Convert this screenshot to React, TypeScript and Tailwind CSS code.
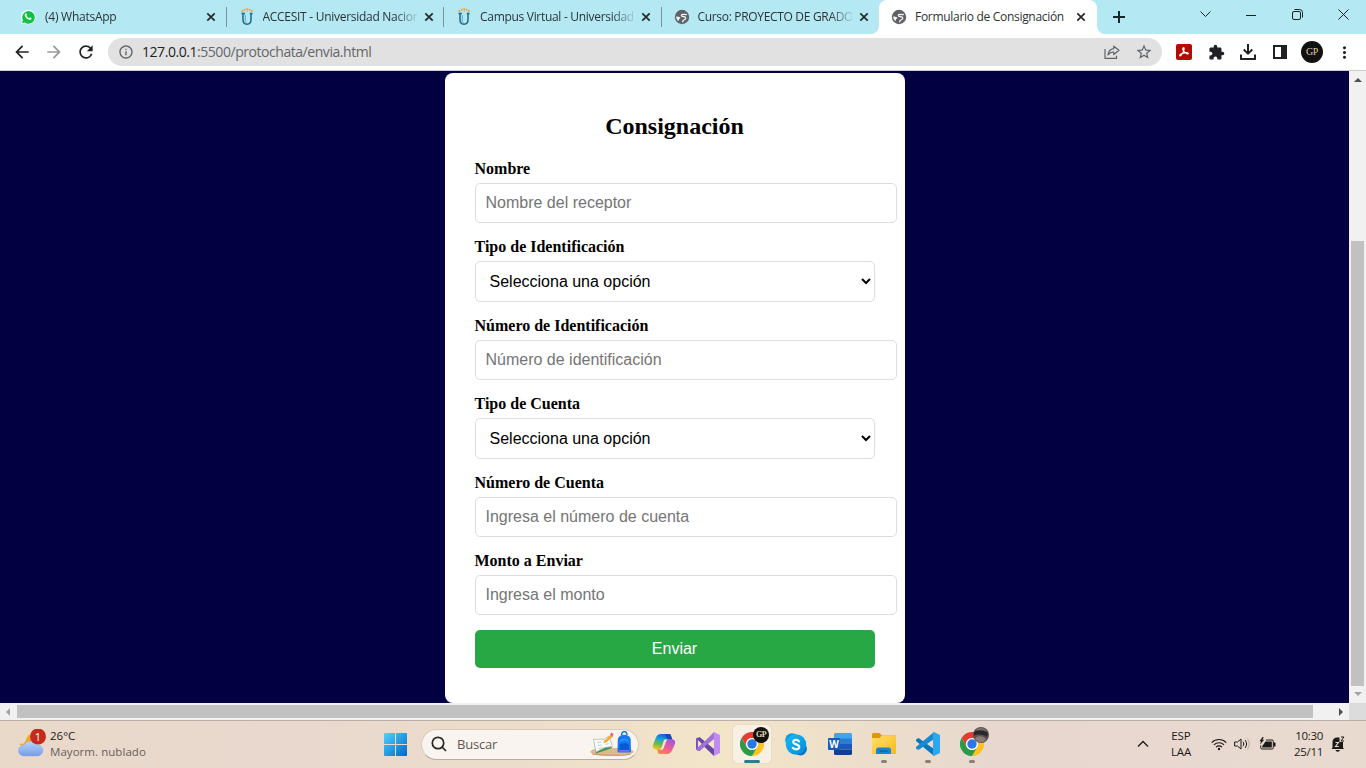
import React from "react";
import { MdArrowBack, MdArrowForward, MdRefresh, MdExtension, MdInfoOutline, MdStarBorder, MdMoreVert } from "react-icons/md";

const UI = "font-['Open_Sans','Noto_Sans',sans-serif]";

function WhatsAppIcon() {
  return (
    <svg width="16" height="16" viewBox="0 0 16 16" className="-ml-[2px]">
      <path d="M1 15.3 2 11.6A7.2 7.2 0 1 1 4.6 14.3Z" fill="#fff" />
      <path d="M2 14.3 2.9 11.3A6.3 6.3 0 1 1 4.8 13.5Z" fill="#12c143" />
      <path d="M5.5 4.4c.4-.3.9-.2 1.1.3l.4 1c.1.3-.4.8-.5 1 .6 1.2 1.5 2 2.6 2.5.3-.1.6-.9 1-.8l1.3.7c.4.4-.1 1.4-.7 1.7-1.6.7-5.6-2-6-4.3-.1-.9.3-1.700.8-2.100Z" fill="#fff" />
    </svg>
  );
}

function UniversityIcon() {
  return (
    <svg width="16" height="18" viewBox="0 0 16 18">
      <path d="M2.500 5.500H6M4 5.500v6.300c0 2.800 1.400 4.400 4 4.400s4-1.600 4-4.400V5.500M10.800 5.500h2.700" fill="none" stroke="#176a8c" strokeWidth="1.500" />
      <path d="M6.300 7v5.500c0 1 .5 1.700 1.200 2" fill="none" stroke="#3f8aa5" strokeWidth=".7" />
      <g fill="#f59a2f">
        <circle cx="3.400" cy="3" r="1" /><circle cx="5.700" cy="1.800" r="1" /><circle cx="8.200" cy="1.300" r="1" />
        <circle cx="10.600" cy="1.800" r="1" /><circle cx="12.800" cy="3" r="1" /><circle cx="8.200" cy="3.600" r=".6" />
      </g>
    </svg>
  );
}

function GlobeIcon() {
  return (
    <svg width="16" height="16" viewBox="0 0 16 16">
      <circle cx="8" cy="8" r="7.200" fill="#5f6368" />
      <path d="M12.800 5.400c-1.200.4-2.300 0-3.500-.100-1.100-.1-1.900.3-1.900 1.100 0 .9.900 1 1.700 1.100 1.500.200 2.800.6 2.600 1.800-.2 1.300-1.700 1.400-2.400 2.200-.5.6-.4 1.300-1.200 1.500" fill="none" stroke="#eef3f4" strokeWidth="1.300" />
      <path d="M2.200 7.500c1.500.1 2.800.1 3.800.8.700.5.300 1.100-.4 1.500-.6.300-.5 1.300-1 2.100C3 11.200 2.100 9.500 2.200 7.500Z" fill="#eef3f4" />
    </svg>
  );
}

function CloseIcon() {
  return (
    <svg width="10" height="10" viewBox="0 0 10 10" className="shrink-0">
      <path d="M1.300 1.300 8.700 8.700M8.700 1.300 1.300 8.700" stroke="#24292c" strokeWidth="1.700" />
    </svg>
  );
}

type TabProps = { icon: React.ReactNode; title: string; active?: boolean; separator?: boolean; tracking: string };

function Tab({ icon, title, active, separator, tracking }: TabProps) {
  return (
    <div className={`relative flex h-[34px] w-[217.5px] shrink-0 items-center pl-[12px] ${active ? "rounded-t-lg bg-white" : ""}`}>
      {active && (
        <>
          <svg className="absolute bottom-0 -left-2" width="8" height="8"><path d="M8 0v8H0A8 8 0 0 0 8 0Z" fill="#fff" /></svg>
          <svg className="absolute -right-2 bottom-0" width="8" height="8"><path d="M0 0v8h8A8 8 0 0 1 0 0Z" fill="#fff" /></svg>
        </>
      )}
      <span className="flex w-4 shrink-0 justify-center">{icon}</span>
      <span className={`ml-2 mr-[7px] w-[154px] shrink-0 overflow-hidden whitespace-nowrap text-[12px] leading-4 text-[#2b3335] ${tracking} ${active ? "" : "[mask-image:linear-gradient(to_right,black_132px,transparent_157px)]"}`}>
        {title}
      </span>
      <CloseIcon />
      {separator && <span className="absolute top-[7px] right-0 h-5 w-px bg-[#7f9297]" />}
    </div>
  );
}

function TabStrip() {
  return (
    <div className="flex h-[34px] bg-[#b4e8f3] pl-[9px]">
      <Tab icon={<WhatsAppIcon />} title="(4) WhatsApp" separator tracking="tracking-[-0.25px]" />
      <Tab icon={<UniversityIcon />} title="ACCESIT - Universidad Nacion" separator tracking="tracking-[-0.28px]" />
      <Tab icon={<UniversityIcon />} title="Campus Virtual - Universidad" separator tracking="tracking-[-0.3px]" />
      <Tab icon={<GlobeIcon />} title="Curso: PROYECTO DE GRADO" tracking="tracking-[-0.32px]" />
      <Tab icon={<GlobeIcon />} title="Formulario de Consignación" active tracking="tracking-[-0.3px]" />
      <div className="flex w-[44px] items-center justify-center">
        <svg width="12" height="12" viewBox="0 0 12 12"><path d="M6 0v12M0 6h12" stroke="#16292e" strokeWidth="2" /></svg>
      </div>
      <div className="ml-auto flex h-[29px] items-center text-[#172225]">
        <span className="flex w-[46px] justify-center"><svg width="11" height="11" viewBox="0 0 11 11"><path d="m.5 2.500 5 5 5-5" fill="none" stroke="currentColor" /></svg></span>
        <span className="flex w-[46px] justify-center"><svg width="10" height="10"><path d="M0 5.500h10" stroke="currentColor" /></svg></span>
        <span className="flex w-[46px] justify-center">
          <svg width="11" height="11" viewBox="0 0 11 11" fill="none" stroke="currentColor"><rect x=".5" y="2.500" width="8" height="8" rx="1.500" /><path d="M2.500.5h5a3 3 0 0 1 3 3v5" /></svg>
        </span>
        <span className="flex w-[46px] justify-center"><svg width="11" height="11" viewBox="0 0 11 11"><path d="m.5.5 10 10m0-10-10 10" stroke="currentColor" /></svg></span>
      </div>
    </div>
  );
}

function Toolbar() {
  const slot = "flex w-8 shrink-0 items-center justify-center";
  return (
    <div className="flex h-[37px] items-center border-b border-[#c8cecf] bg-white pl-[6px] text-[#202124]">
      <span className={slot}><MdArrowBack size={20} /></span>
      <span className={`${slot} text-[#999]`}><MdArrowForward size={20} /></span>
      <span className={slot}><MdRefresh size={20} /></span>
      <div className="ml-[6px] flex h-7 w-[1054px] items-center rounded-full bg-[#e1e1e1] pl-[10px] pr-[2px]">
        <MdInfoOutline size={16} className="text-[#5f6368]" />
        <span className="ml-2 text-[14px] leading-5 tracking-[-0.45px] text-[#62676a]"><span className="text-[#202124]">127.0.0.1</span>:5500/protochata/envia.html</span>
        <span className={`${slot} ml-auto`}>
          <svg width="16" height="16" viewBox="0 0 16 16" fill="none" stroke="#5f6368" strokeWidth="1.200"><path d="M1 5v9.300h11.500v-2.600" /><path d="M9.800 2.200 15 6.300l-5.200 4.200V8C7.300 7.900 5.500 8.800 4 11c.3-3.300 2.300-6 5.800-6.400Z" strokeLinejoin="round" /></svg>
        </span>
        <span className={slot}><MdStarBorder size={18} className="text-[#5f6368]" /></span>
      </div>
      <div className="ml-[6px] flex">
        <span className={slot}>
          <svg width="16" height="16" viewBox="0 0 16 16"><rect width="16" height="16" rx="2" fill="#b30b00" /><path d="M7.200 3.800c1-.5 1.100.8.700 2.400C7.500 8 5.300 11.800 4.100 12c-1.300 0-.2-1.800 2.200-2.600 2.200-.7 5.300-1.100 6-.1.500 1.100-2.100.8-3.500-.9C7.600 7.200 6.300 4.800 7.200 3.800Z" fill="none" stroke="#fff" strokeWidth="1.150" /></svg>
        </span>
        <span className={slot}><MdExtension size={17} /></span>
        <span className={slot}>
          <svg width="16" height="16" viewBox="0 0 16 16" fill="none" stroke="#202124" strokeWidth="2"><path d="M8 0v9M3.700 5.500 8 9.700l4.300-4.200M1 10.500V15h14v-4.500" /></svg>
        </span>
        <span className={slot}>
          <svg width="14" height="14" viewBox="0 0 14 14"><path d="M0 0h14v14H0Zm2 2v10h6V2Z" fill="#202124" fillRule="evenodd" /></svg>
        </span>
        <span className={slot}>
          <span className="flex size-[22px] items-center justify-center rounded-full bg-[#12110f] font-['Liberation_Serif',serif] text-[10px] leading-none tracking-[-0.5px] text-[#dccba4]">GP</span>
        </span>
        <span className={slot}><MdMoreVert size={19} /></span>
      </div>
    </div>
  );
}

const ARROW = "#505050";

function VerticalScrollbar() {
  return (
    <div className="flex w-[17px] shrink-0 flex-col items-center bg-[#f1f1f1]">
      <span className="flex h-[17px] items-center"><svg width="8" height="4"><path d="M0 4 4 0l4 4Z" fill={ARROW} /></svg></span>
      <span className="mt-[153px] h-[445px] w-[13px] bg-[#c1c1c1]" />
      <span className="flex h-[15px] items-center"><svg width="8" height="4"><path d="m0 0 4 4 4-4Z" fill="#a3a3a3" /></svg></span>
    </div>
  );
}

function HorizontalScrollbar() {
  return (
    <div className="flex h-[17px] bg-[#f1f1f1]">
      <div className="flex w-[1349px] items-center">
        <span className="flex w-[17px] justify-center pr-px"><svg width="4" height="8"><path d="M4 0 0 4l4 4Z" fill="#a3a3a3" /></svg></span>
        <span className="h-[13px] w-[1296px] bg-[#c1c1c1]" />
        <span className="ml-auto flex w-[17px] justify-center"><svg width="4" height="8"><path d="m0 0 4 4-4 4Z" fill={ARROW} /></svg></span>
      </div>
      <div className="w-[17px] bg-[#dcdcdc]" />
    </div>
  );
}

type Field = { label: string; hint: string; kind: "input" | "select" };

const FIELDS: Field[] = [
  { label: "Nombre", hint: "Nombre del receptor", kind: "input" },
  { label: "Tipo de Identificación", hint: "Selecciona una opción", kind: "select" },
  { label: "Número de Identificación", hint: "Número de identificación", kind: "input" },
  { label: "Tipo de Cuenta", hint: "Selecciona una opción", kind: "select" },
  { label: "Número de Cuenta", hint: "Ingresa el número de cuenta", kind: "input" },
  { label: "Monto a Enviar", hint: "Ingresa el monto", kind: "input" },
];

function TransferForm() {
  return (
    <form className="mt-[2px] h-[630px] w-[460px] rounded-lg bg-white px-[30px] pt-10 font-['Liberation_Serif',serif] text-black">
      <h2 className="mb-5 text-center text-[24px] leading-[27px] font-bold">Consignación</h2>
      {FIELDS.map((f) => (
        <div key={f.label} className="mb-[15px]">
          <label className="mb-[5px] block text-[16px] leading-[18px] font-bold">{f.label}</label>
          {f.kind === "input" ? (
            <input placeholder={f.hint} className="block h-10 w-[422px] rounded-[5px] border border-[#ddd] bg-white px-[10px] pb-px font-['Liberation_Sans',sans-serif] text-[16px] placeholder:text-[#757575]" />
          ) : (
            <select className="block h-[41px] w-[400px] rounded-[5px] border border-[#ddd] bg-white p-[10px] font-['Liberation_Sans',sans-serif] text-[16px] leading-normal">
              <option>{f.hint}</option>
            </select>
          )}
        </div>
      ))}
      <button type="button" className="block h-[38px] w-[400px] rounded-[5px] bg-[#28a745] pb-px font-['Liberation_Sans',sans-serif] text-[16px] text-white">Enviar</button>
    </form>
  );
}

function WeatherIcon() {
  return (
    <svg width="28" height="30" viewBox="0 0 28 30">
      <defs><linearGradient id="cloud" x2="0" y2="1"><stop stopColor="#b8d5fb" /><stop offset="1" stopColor="#759de7" /></linearGradient></defs>
      <path d="m1 15 5-.5L11 5l3 6 5 2-5 7-9 1 1-3Z" fill="#f5a623" />
      <path d="M6 28a5.500 5.500 0 0 1 0-11 7 7 0 0 1 12.500 0A5.500 5.500 0 0 1 20 28Z" fill="url(#cloud)" stroke="#86a9e8" strokeWidth=".5" transform="translate(0 -1)" />
      <circle cx="20" cy="7.500" r="8" fill="#c42b1c" />
      <text x="20" y="11.500" textAnchor="middle" fontSize="11" fill="#fff" fontFamily="Open Sans">1</text>
    </svg>
  );
}

function StartIcon() {
  return (
    <svg width="23" height="23" viewBox="0 0 23 23">
      <defs><linearGradient id="win" x2="1" y2="1"><stop stopColor="#4fd2fc" /><stop offset="1" stopColor="#0067c7" /></linearGradient></defs>
      <path d="M1 0h10v11H0V1a1 1 0 0 1 1-1ZM12 0h10a1 1 0 0 1 1 1v10H12ZM0 12h11v11H1a1 1 0 0 1-1-1ZM12 12h11v10a1 1 0 0 1-1 1H12Z" fill="url(#win)" />
    </svg>
  );
}

function StudyArt() {
  return (
    <svg width="46" height="26" viewBox="0 0 46 26">
      <path d="M1 21c2-3 5-3 9-4h28c4 1 6 2 7 4-2 3-14 4-22 4S4 25 1 21Z" fill="#dfb98d" />
      <path d="M3.500 23c-3 0 30 3 38 0" fill="none" stroke="#c79668" />
      <path d="m5 10 15-3 3 10-16 5.500Z" fill="#3f9455" />
      <path d="m4.500 8.500 8-.5 2 .5L20 5l3.500 10.500-7.500 1-9 4.500Z" fill="#fbfbfb" stroke="#9fb8a8" strokeWidth=".7" />
      <path d="m8 11.500 4-.5m-3.500 3.500 4-.5m-3 3.500 4-1m2-6 2-1m-1 4 3-1" stroke="#b9c0c4" strokeWidth=".8" />
      <path d="m15 10 6.500-6 2 2-6.500 5.500-2.500.8Z" fill="#f9a92c" /><path d="m21 4 1.300-2.500 2.500 1.500-1.500 3Z" fill="#ec6a75" />
      <path d="M32.500 4c0-4.500 5.500-4.500 5.500 0" fill="none" stroke="#0c69c9" strokeWidth="1.300" />
      <path d="M28.800 8.500C29.300 2 41.200 2 41.700 8.500L42 20a1.500 1.500 0 0 1-1.500 1.500H30A1.500 1.500 0 0 1 28.500 20Z" fill="#1479f2" />
      <path d="M30.500 14c1.500-2.300 8-2.300 9.500 0v6h-9.500Z" fill="#0a58d8" />
      <path d="M31 10.500c2-2.500 6.500-2.500 8.500 0" fill="none" stroke="#45a8ff" /><path d="M30.500 19.700h9.500" stroke="#8d6af5" strokeWidth="1.500" />
    </svg>
  );
}

function CopilotIcon() {
  return (
    <svg width="24" height="22" viewBox="0 0 26 24">
      <defs>
        <linearGradient id="cpA" x1=".6" x2=".3" y2="1"><stop stopColor="#1757d4" /><stop offset=".35" stopColor="#16a3d8" /><stop offset=".7" stopColor="#75bc43" /><stop offset="1" stopColor="#efc51c" /></linearGradient>
        <linearGradient id="cpB" x1=".8" x2=".2" y2="1"><stop stopColor="#9a54eb" /><stop offset=".5" stopColor="#ec5a9b" /><stop offset="1" stopColor="#ff8650" /></linearGradient>
      </defs>
      <path d="M10 1h8c2 0 2.500 1 3 3.200L22 7h-4c-2 0-3 .8-3.600 2.500l-2.300 6.700c-.8 1.500-1.500 2-3 2H5c-3 0-5-2-4-5L4 5.500C5 2.500 7 1 10 1Z" fill="url(#cpA)" />
      <path d="M16 23H9c-2 0-2.500-1-3-3.500l-.5-1.500H9c1.500 0 2.500-.6 3-2.200L14.500 9c.5-1.500 1.500-2.300 3-2.300H21c3 0 5 2 4 5L22 18.500c-1 2.500-3 4.500-6 4.500Z" fill="url(#cpB)" />
      <path d="M14 7.200h3c-1 .5-1.500 1.300-1.800 2.300L12.700 16c-.3 1-.9 1.700-1.700 2.200H8.500c1.200-.6 1.500-1.400 1.800-2.200L12.500 9c.3-.9.700-1.500 1.500-1.800Z" fill="#f3e7cf" />
      <path d="M14 1h4c2 0 2.500 1 3 3.200l.8 2.500H18c-2-.3-2.500-1.500-4-5.700Z" fill="#164ab6" />
    </svg>
  );
}

function VisualStudioIcon() {
  return (
    <svg width="24" height="24" viewBox="0 0 24 24">
      <path d="M0 7 3.500 5 18 17v7L8 14.500 3.500 19 0 17.500v-2l2 .5 4-4-4-4-2 .5Z" fill="#6946a5" />
      <path d="M0 6.500v11l2 1V5.500Z" fill="#7a55b6" />
      <path d="M18 0v7L4 18.500 2 19l-2-2 8-7Z" fill="#a171d7" />
      <path d="m18 0 6 3v18l-6 3Z" fill="#c28bf2" />
    </svg>
  );
}

function ChromeIcon() {
  return (
    <svg width="24" height="24" viewBox="0 0 24 24">
      <path d="M1.600 6A12 12 0 0 1 22.400 6H12a6 6 0 0 0-5.200 9Z" fill="#e53c30" />
      <path d="M22.400 6A12 12 0 0 1 12 24l5.200-9A6 6 0 0 0 12 6Z" fill="#fcc31e" />
      <path d="M12 24A12 12 0 0 1 1.600 6l5.200 9a6 6 0 0 0 10.400 0Z" fill="#299b49" />
      <circle cx="12" cy="12" r="6" fill="#fff" /><circle cx="12" cy="12" r="4.700" fill="#2878e8" />
    </svg>
  );
}

function SkypeIcon() {
  return (
    <svg width="22" height="23" viewBox="0 0 22 23">
      <defs><linearGradient id="sky" x2="1" y2="1"><stop stopColor="#18bdf4" /><stop offset="1" stopColor="#0089dc" /></linearGradient></defs>
      <circle cx="7" cy="7" r="6.800" fill="#0b9be8" /><circle cx="15.500" cy="16" r="6.400" fill="#0875c9" /><circle cx="11" cy="11.500" r="10.200" fill="url(#sky)" />
      <path d="M14 8.300C12.500 6.300 8.300 6.500 8.300 9c0 3 5.900 1.800 5.900 5 0 2.800-4.400 3-6.500.8" fill="none" stroke="#fff" strokeWidth="2.200" strokeLinecap="round" />
    </svg>
  );
}

function WordIcon() {
  return (
    <svg width="24" height="22" viewBox="0 0 24 22">
      <path d="M6 1.500A1.500 1.500 0 0 1 7.500 0h15A1.500 1.500 0 0 1 24 1.500V6H6Z" fill="#41a5ee" /><path d="M6 5.500h18V11H6Z" fill="#2b7cd3" /><path d="M6 11h18v5.500H6Z" fill="#185abd" /><path d="M6 16.500h18v4a1.500 1.500 0 0 1-1.500 1.500h-15A1.500 1.500 0 0 1 6 20.500Z" fill="#103f91" />
      <rect y="5" width="12" height="12" rx="1" fill="#185abd" />
      <text x="6" y="14.500" textAnchor="middle" fontSize="10" fontWeight="700" fill="#fff" fontFamily="Open Sans">W</text>
    </svg>
  );
}

function FolderIcon() {
  return (
    <svg width="24" height="22" viewBox="0 0 24 22">
      <defs><linearGradient id="fold" x2="1" y2="1"><stop stopColor="#ffdf6d" /><stop offset="1" stopColor="#fbb918" /></linearGradient></defs>
      <path d="M0 1.500A1.500 1.500 0 0 1 1.500 0h6L10 2.500h14V10H0Z" fill="#dc9807" />
      <path d="M0 5h7.500L10 2.500h12.500A1.500 1.500 0 0 1 24 4v17H0Z" fill="url(#fold)" />
      <path d="M4 21v-4a2.500 2.500 0 0 1 2.500-2.500h10A2.500 2.500 0 0 1 19 17v4Z" fill="#1786d2" /><path d="M7.500 17.500h8v1.200h-8Z" fill="#075c9b" />
    </svg>
  );
}

function CodeIcon() {
  return (
    <svg width="24" height="24" viewBox="0 0 24 24">
      <path d="M0 7.500 2.500 6 18 17v7L0 9Z" fill="#0877bd" /><path d="M0 16.500 2.500 18 18 7V0L0 15Z" fill="#168bd0" /><path d="m18 0 6 3v18l-6 3-1-.8V.8Z" fill="#2ba8ef" />
    </svg>
  );
}

function AppSlot({ children, mark }: { children: React.ReactNode; mark?: "open" | "active" }) {
  return (
    <div className="flex w-11 justify-center">
      <div className={`relative flex h-[38px] w-[38px] items-center justify-center rounded ${mark === "active" ? "bg-[#f8f0e3] shadow-[0_0_1px_#b9aa94]" : ""}`}>
        {children}
        {mark === "open" && <span className="absolute bottom-0 left-4 h-[3px] w-[6px] rounded-full bg-[#8a8078]" />}
        {mark === "active" && <span className="absolute bottom-0 left-[11px] h-[3px] w-4 rounded-full bg-[#26808e]" />}
      </div>
    </div>
  );
}

function Tray() {
  return (
    <div className="ml-auto flex items-center pr-[20px] text-[#1b1a19]">
      <svg width="12" height="8" viewBox="0 0 12 8"><path d="m1 6.500 5-5 5 5" fill="none" stroke="currentColor" strokeWidth="1.300" /></svg>
      <span className="ml-3 w-10 text-center text-[11.5px] leading-4 tracking-[-0.1px]">ESP<br />LAA</span>
      <svg className="ml-[10px]" width="16" height="14" viewBox="0 0 16 14" fill="none" stroke="currentColor" strokeWidth="1.100"><path d="M.7 5.600a10.300 10.300 0 0 1 14.600 0M2.900 7.900a7.200 7.200 0 0 1 10.200 0M5 10.100a4.200 4.200 0 0 1 6 0" /><circle cx="8" cy="12" r="1.200" fill="currentColor" stroke="none" /></svg>
      <svg className="ml-[7px]" width="17" height="14" viewBox="0 0 17 14" fill="none" stroke="currentColor"><path d="M.6 5h2.900L7 2v10L3.500 9H.6Z" strokeLinejoin="round" /><path d="M9 4.800c1 1.200 1 3.200 0 4.400M11 3c2 2.200 2 5.800 0 8" /><path d="M13.200 1.500c2.700 3 2.700 8 0 11" stroke="#b5a89f" /></svg>
      <svg className="ml-[8px]" width="17" height="14" viewBox="0 0 17 14">
        <path d="M7 3h6a1.300 1.300 0 0 1 1.300 1.300v6.400A1.300 1.300 0 0 1 13 12H3a1.300 1.300 0 0 1-1.300-1.300V8.500" fill="none" stroke="currentColor" />
        <path d="M6.500 4.500h6.300v6H3.200V9.300Z" fill="currentColor" />
        <path d="M14.500 5.500H16a.5.5 0 0 1 .5.5v3a.5.5 0 0 1-.5.5h-1.500ZM3.500 0 .5 4.200H2L1 7.500l4.200-4.700H3.500L4.700 0Z" fill="currentColor" />
      </svg>
      <span className="ml-[7px] w-10 text-right text-[11.5px] leading-4 tracking-[-0.3px]">10:30<br />25/11</span>
      <svg className="ml-2" width="15" height="16" viewBox="0 0 15 16">
        <path d="M1.500 11.500V6A4.500 4.500 0 0 1 6 1.500h2.500V6H12v5.500l1 1.500H.5Z" fill="currentColor" /><path d="M4.500 14H9a2.300 2.300 0 0 1-4.500 0Z" fill="currentColor" />
        <path d="M4.500 6.500h3l-3 4h3.300" fill="none" stroke="#e9dad0" strokeWidth="1.100" /><path d="M10 1h3l-3 4h3" fill="none" stroke="currentColor" />
      </svg>
    </div>
  );
}

function Taskbar() {
  return (
    <div className="flex h-12 items-center border-t border-[#b8b0a8] bg-[linear-gradient(90deg,#e9d9c9_0%,#e9d8ce_22%,#ebdccb_35%,#f2e5c8_53%,#ecdecb_64%,#e7d7cf_73%,#e9dad0_100%)] pb-px">
      <div className="flex w-[384px] items-center pl-[18px]">
        <WeatherIcon />
        <div className="ml-1 text-[11.5px] leading-4 text-[#1b1a19]">
          <div>26°C</div>
          <div className="tracking-[0.05px] text-[#67605b]">Mayorm. nublado</div>
        </div>
      </div>
      <StartIcon />
      <div className="ml-[14px] flex h-[31px] w-[218px] items-center rounded-full border border-[#d9cbbb] border-b-[#b9ada0] bg-[#f9f4ef] pl-[9px] pr-[3px]">
        <svg width="16" height="16" viewBox="0 0 16 16" fill="none" stroke="#282725" strokeWidth="1.700"><circle cx="7" cy="7" r="5.700" /><path d="m11 11 4 4" /></svg>
        <span className="ml-[10px] text-[13px] leading-5 tracking-[-0.2px] text-[#5d5955]">Buscar</span>
        <span className="ml-auto"><StudyArt /></span>
      </div>
      <div className="ml-[3px] flex">
        <AppSlot><CopilotIcon /></AppSlot>
        <AppSlot><VisualStudioIcon /></AppSlot>
        <AppSlot mark="active">
          <ChromeIcon />
          <span className="absolute top-[2px] right-[2px] flex size-4 items-center justify-center rounded-full bg-[#12110f] font-['Liberation_Serif',serif] text-[8px] leading-none font-bold tracking-[-0.5px] text-[#e4d6b6]">GP</span>
        </AppSlot>
        <AppSlot><SkypeIcon /></AppSlot>
        <AppSlot><WordIcon /></AppSlot>
        <AppSlot mark="open"><FolderIcon /></AppSlot>
        <AppSlot mark="open"><CodeIcon /></AppSlot>
        <AppSlot mark="open">
          <ChromeIcon />
          <svg className="absolute top-[2px] right-[2px]" width="16" height="16" viewBox="0 0 16 16"><circle cx="8" cy="8" r="8" fill="#5a5355" /><path d="M1 5c4-2 9-2 14 1l-1 4C9 7 4 7 1 9Z" fill="#2a2629" /><path d="M2 11c4-3 8-2 11 1-3 5-9 4-11-1Z" fill="#8c7c76" /><path d="M4 3c4-2 7-1 9 1" stroke="#918b8e" fill="none" /></svg>
        </AppSlot>
      </div>
      <Tray />
    </div>
  );
}

export default function App() {
  return (
    <div className={`flex h-[768px] w-[1366px] flex-col overflow-hidden ${UI}`}>
      <TabStrip />
      <Toolbar />
      <div className="flex h-[632px] bg-[#030042]">
        <main className="flex w-[1349px] items-start justify-center">
          <TransferForm />
        </main>
        <VerticalScrollbar />
      </div>
      <HorizontalScrollbar />
      <Taskbar />
    </div>
  );
}
